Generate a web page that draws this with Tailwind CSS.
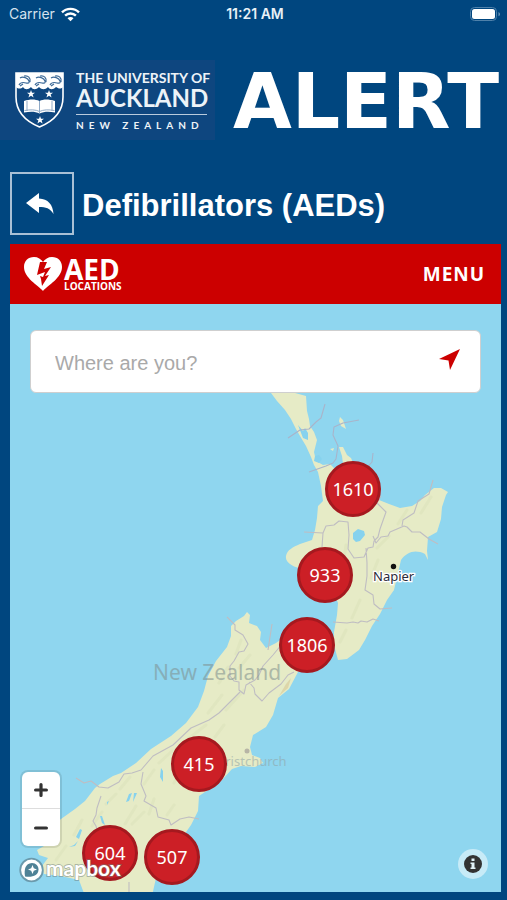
<!DOCTYPE html>
<html lang="en">
<head>
  <meta charset="UTF-8" />
  <meta name="viewport" content="width=device-width, initial-scale=1.0" />
  <title>Alert - Defibrillators (AEDs)</title>
  <script src="https://cdn.jsdelivr.net/npm/@tailwindcss/browser@4"></script>
</head>
<body class="bg-[#00467f] text-white font-['Liberation_Sans',sans-serif]">
<div class="flex flex-col min-h-screen pb-2">

  <!-- Status bar -->
  <div class="grid grid-cols-3 items-center h-7 pl-[9px] pr-1.5 text-sm font-['Inter',sans-serif]">
    <div class="flex items-center gap-1.5 text-[#d5e2ee]">
      <span>Carrier</span>
      <svg class="w-[19px] h-[15px]" viewBox="0 0 19 15" fill="none" stroke="#fff" stroke-width="2.4">
        <path d="M1 5.4C5.6.7 13.400.7 18 5.400" />
        <path d="M4.100 8.700c3-3 7.800-3 10.800 0" />
        <path d="M6.500 11.200c1.600-1.600 4.400-1.600 6 0L9.500 14.300z" fill="#fff" stroke="none" />
      </svg>
    </div>
    <div class="text-center font-semibold text-[#e8f0f6]">11:21 AM</div>
    <svg class="justify-self-end w-[31px] h-[15px]" viewBox="0 0 31 15">
      <rect x=".5" y=".5" width="26" height="13" rx="4" fill="none" stroke="#4f81aa" />
      <rect x="2" y="2" width="23" height="10" rx="2.500" fill="#fff" />
      <path d="M28.500 5c2 .8 2 3.500 0 4.300z" fill="#6f97b9" />
    </svg>
  </div>

  <!-- Logo -->
  <header class="flex items-center justify-between mt-6 h-[96px] pr-2">
    <div class="flex items-center gap-3 h-20 pl-[15px] pr-2 bg-[#0e467f]">
      <svg class="w-[49px] h-[56px] shrink-0" viewBox="0 0 49 56">
        <path d="M1 1h47v24c0 15-9 24-23.500 30C10 49 1 40 1 25z" fill="#0e467f" stroke="#fff" stroke-width="1.600" />
        <path d="M1 1h47v14c-3 3-5 1-7 0-3 3-6 3-8 0-3 3-6 3-9 0-3 3-6 3-8 0-3 3-6 3-8 0-2 2-5 2-7 0z" fill="#fff" />
        <g fill="none" stroke="#3d6a98" stroke-width="1.200">
          <path id="kiwi" d="M4 13c2-4 7-2 7-2s4 1 3-2-6-5-9-3M9 4c4-1 7 2 6 6M5 14l3-2" />
          <use href="#kiwi" x="16" />
          <use href="#kiwi" x="31" />
        </g>
        <g fill="#fff">
          <path id="star" d="M16 18l1 2.700h3l-2.400 1.900 1 3L16 23.800l-2.600 1.800 1-3L12 20.700h3z" />
          <use href="#star" x="18" />
          <use href="#star" x="9" y="26" />
          <path d="M9 29c6-2 11-2 15.500 0 4-2 9-2 15.500 0v11.500c-6-1-11-1-15.500 1-4-2-9-2-15.500-1z" />
        </g>
        <path d="M24.500 29v12M12 29v10M37 29v10M9.500 38.500c6-1 11-1 15 1 4-2 9-2 15-1" fill="none" stroke="#8fa9c6" />
      </svg>
      <div class="w-[131px] whitespace-nowrap font-['Lato',sans-serif] text-[#edf3f8]">
        <div class="text-[14px] leading-4 font-bold">THE UNIVERSITY OF</div>
        <div class="text-[24px] leading-6 font-bold">AUCKLAND</div>
        <div class="mt-1 border-t border-[#b9cbdd] pt-1 text-[10px] leading-3 font-bold tracking-[5px]">NEW ZEALAND</div>
      </div>
    </div>
    <div class="mt-1 text-[76px] leading-[80px] font-bold font-['DejaVu_Sans',sans-serif]">ALERT</div>
  </header>

  <!-- Page title -->
  <div class="flex items-center gap-2 mt-6 px-2.5">
    <button type="button" aria-label="Back" class="flex items-center justify-center w-16 h-[63px] border-2 border-[#a9c0d5]">
      <svg class="w-7 h-[21px] mr-1" viewBox="0 0 28 21" fill="#fff">
        <path d="M0 10L13 0v5.500c9 .5 14 6 14.500 15.500C24 15 20 14 13 14v6z" />
      </svg>
    </button>
    <h1 class="pt-1 text-[31px] leading-10 font-bold">Defibrillators (AEDs)</h1>
  </div>

  <!-- AED locations -->
  <main class="flex flex-col flex-1 mt-[9px] ml-2.5 mr-1.5 font-['Open_Sans',sans-serif]">
    <nav class="flex items-center justify-between h-[60px] bg-[#cc0000] pl-[14px] pr-4">
      <a href="#" class="flex items-center gap-0.5">
        <svg class="w-[38px] h-[34px]" viewBox="0 0 38 34">
          <path d="M19 34C14 28 0 21 0 10 0 4 4 0 10 0c4 0 7 2 9 5 2-3 5-5 9-5 6 0 10 4 10 10 0 11-14 18-19 24z" fill="#fff" />
          <path d="M16 5h7l-3 7 7-2-6 9 4-1-7 11-1-7-1-3 3 1 2-5-8 3z" fill="#c00" />
        </svg>
        <span class="font-bold">
          <span class="block text-[28px] leading-6">AED</span>
          <span class="block text-[10px] leading-[10px]">LOCATIONS</span>
        </span>
      </a>
      <button type="button" class="text-[19px] font-bold tracking-wider">MENU</button>
    </nav>

    <div class="relative flex-1 min-h-[588px] overflow-hidden bg-[#8fd6ef]">

      <!-- Map -->
      <svg class="absolute inset-0 w-full h-full" viewBox="10 304 491 588" preserveAspectRatio="xMinYMin slice">
        <g fill="#e6ebc6">
          <path d="M266 385l5 8 6 8 8 9 6 9 5 10 4 7 6 10 5 11 3 8 4 7 3 14 2 15-5 5-1 12-2 12-3 10-12 4c-7 3-13 6-14 12s6 10 13 12l30 13 9 22-1 12-3 17v13l4 15 9-1 12-9 6-10 7-14 8-12 7-14 7-10 4-17 3-13c6-8 14-11 24-6l3 6-1-9 1-14 9-5 4-13 1-12 4-12 2-3-7-4h-7l-9 7-5 6-8 5-12 2-11-4-10-4-14-15-8-10-2-8-4-9-4-3-4-8h-4l3 9 1 8-1 9-6-3-6-6-7 1-7-4-2-9 3-12-3-8-4-6-1-7-2-8-1-15z" />
          <path d="M340 417l3 3 3 9-5-3-2-5zM330 449l4-1-1 3z" />
          <path d="M247 612l3 3-1 8 8 3 4 6-1 8 6 8 10-5 14-10 20 27-12 12-9 17-11 9-5 17-7 12-13 8-3 12 2 8 8 3 3 5-8 4-14-1-9 3-10 11-14 10-9 6-1 15-7 14-12 17-14 24-9 12-4 18H85l-6-16-18-4-17-2-2-8 6-8-9-3-2-5 7-4 8-19 9-8 14-10 10-8 10-13 5-4 13-8 8-3 15-10 15-14 20-13 15-13 12-16 6-16 4-15 8-15 11-14 4-11v-10l5-5 8-5z" />
        </g>
        <!-- Relief -->
        <g fill="none" stroke="#d9e1b8" stroke-width="3" stroke-linecap="round" opacity=".45">
          <path d="M241 640l-5 14M250 655l-11 13M228 667l-9 16M222 695l-14 18M244 690l-18 20M206 725l-18 14M224 725l-9 12M172 751l-13 12M184 765l-10 18M154 770l-10 14M130 777l-10 12M116 794l-10 10M136 806l-11 18M102 812l-10 14M82 820l-8 15M154 799l-5 15M144 812l-12 12M66 846l-10 14M174 805l-7 10M90 860l-12 10" />
          <path d="M407 510l-9 14M431 497l-10 16M389 536l-12 12M378 560l-7 18M360 600l-8 18M346 630l-6 12M369 503l-10 8M346 545l-2 14" />
        </g>
        <path d="M286 684l5-6-3 10-9 8z" fill="#d8cd9d" opacity=".7" />
        <!-- Lakes -->
        <g fill="#86d2ee">
          <path d="M353 533l5-4 6 2 1 4-5 6-4 1-3-3zM315 456l4-1 3 4-3 4-5-2zM298 425l5 6 2-3 3 5v7l-5-2z" />
          <path d="M161 768l2 3v11l-3-5zM129 794l3-1-3 8-3 1zM134 793l3 0-4 9zM80 829l2 1-3 9-3-2zM69 847l5-2 4-4-3 5zM100 816l2 0 3 9-3-2zM107 802l2-1-2 4z" />
        </g>
        <!-- Region boundaries -->
        <g fill="none" stroke="#bfbdc2" stroke-width="1.100" stroke-linejoin="round">
          <path d="M288 438l12-8 9-1 7-7 5-4 4-14M309 472l17-6 7-3 3-4 2-13-5-11 1-8 9-4 16-3M364 471l8-9 1-9" stroke="#a9b4ca" />
          <path d="M304 532l19 1 3-7 8-1 5-4 9 1 1 13-1 14 6 9 10-1 4-9 5-1 1-6 4-4 2-8 6-17-9-9 4-7M373 536l3 7 5-6 7-1 2-4 14-6 3 1 5 5 8 0 9 7 9 5M402 526l1-6 11-7 4-12 11-7 4-14M323 533l-1 14M366 548l1 15 0 13-2 14 8 5 1 9 6 5 12-1M333 622l14 1 6-1 5 1 3-2 6 1 6-3 6 2" />
          <path d="M227 617l8 8 0 5 8 5 5 9-4 7-5 1-5 9-4 5v10l4 5 5 1 0 8 5 4 2-9 9-5 4-5 4-9 10-11 9-11 5-7M272 624l-4 26M249 682l5 6 1 6 7 7 7-8 12-9 7-9 6-3M240 692l-11 11-10 10-10 7-18 8-18 17-20 11-12 14-9 3-8 1-5 8-11 6-9-1-8-6-7 2-8-5M101 796l-4 12-1 7-3 6 3 5 3 12M143 772l-2 12 5 12-2 5 12 7 2 9 11 3 2 5 9-6 9-2 10 2M129 882v10" />
        </g>
        <circle cx="247" cy="751" r="2.500" fill="#b7b5a6" />
        <circle cx="393.500" cy="566.500" r="2.700" fill="#111" />
        <g font-family="'Noto Sans', sans-serif">
          <text x="153" y="680" font-size="21" fill="#7f8f8d" opacity=".55">New Zealand</text>
          <text x="209" y="766" font-size="13" fill="#8fa3a4" opacity=".55">Christchurch</text>
          <text x="373" y="581" font-size="13" fill="#2b2b3a" stroke="#fff" stroke-width="2.500" paint-order="stroke">Napier</text>
        </g>
      </svg>

      <!-- Clusters -->
      <div class="text-[18px] font-['Noto_Sans',sans-serif] [&>button]:absolute [&>button]:size-14 [&>button]:rounded-full [&>button]:border-3 [&>button]:border-[#a5191f] [&>button]:bg-[#cc1f26]">
        <button type="button" class="left-[315px] top-[157px]">1610</button>
        <button type="button" class="left-[287px] top-[243px]">933</button>
        <button type="button" class="left-[269px] top-[313px]">1806</button>
        <button type="button" class="left-[161px] top-[432px]">415</button>
        <button type="button" class="left-[72px] top-[521px]">604</button>
        <button type="button" class="left-[134px] top-[525px]">507</button>
      </div>

      <!-- Search -->
      <form class="relative flex items-center mt-[26px] mx-5 h-[63px] rounded-md border border-[#cfcfcf] bg-white pl-6 pr-5 font-['Liberation_Sans',sans-serif]">
        <input type="text" aria-label="Where are you?" placeholder="Where are you?" class="flex-1 min-w-0 pt-0.5 text-[20px] text-gray-700 placeholder:text-[#a9a9a9] outline-none" />
        <button type="button" aria-label="Use my location" class="mb-1">
          <svg class="w-[21px] h-[21px]" viewBox="0 0 21 21" fill="#cc0000">
            <path d="M21 0L11 21 9.500 11.500 0 10z" />
          </svg>
        </button>
      </form>

      <!-- Zoom control -->
      <div class="absolute left-3 bottom-[46px] w-[38px] rounded-md bg-white shadow-[0_0_0_2px_rgba(0,0,0,0.1)] divide-y divide-[#dddddd]">
        <button type="button" aria-label="Zoom in" class="flex items-center justify-center w-full h-[37px]">
          <svg class="w-[14px] h-[14px]" viewBox="0 0 14 14" stroke="#333" stroke-width="3.200" stroke-linecap="round"><path d="M7 1.600v10.800M1.600 7h10.800" /></svg>
        </button>
        <button type="button" aria-label="Zoom out" class="flex items-center justify-center w-full h-[37px]">
          <svg class="w-[14px] h-[14px]" viewBox="0 0 14 14" stroke="#333" stroke-width="3.200" stroke-linecap="round"><path d="M1.600 7h10.800" /></svg>
        </button>
      </div>

      <!-- Mapbox -->
      <a href="#" aria-label="Mapbox" class="absolute left-2 bottom-2">
        <svg class="w-28 h-7 overflow-visible" viewBox="0 0 112 28">
          <circle cx="13.500" cy="14" r="11.300" fill="#fff" stroke="#6b9aac" stroke-width="1.800" />
          <path d="M7 20.500c-1-7 0-13 7-13.500 4 0 6.500 3 6.500 6.500 0 6-6 8-13.500 7z" fill="#4f8296" />
          <path d="M14.500 9l1.300 3.200L19 13.500l-3.200 1.300-1.300 3.200-1.300-3.200-3.200-1.300 3.200-1.300z" fill="#fff" />
          <text x="28" y="20" font-family="Lato, sans-serif" font-size="21" font-weight="700" fill="#fff" stroke="#6f7f80" stroke-width="1.800" stroke-opacity=".5" paint-order="stroke">mapbox</text>
        </svg>
      </a>

      <!-- Attribution -->
      <button type="button" aria-label="Map information" class="absolute right-[13px] bottom-[13px] flex items-center justify-center size-[30px] rounded-full bg-white/50">
        <svg class="w-[18px] h-[18px]" viewBox="0 0 18 18">
          <circle cx="9" cy="9" r="9" fill="#333" />
          <path d="M7.500 3.500h3v2.500h-3zM6.500 7.500h4v5h1V14h-5v-1.500h1V9h-1z" fill="#e2f2f8" />
        </svg>
      </button>
    </div>
  </main>
</div>
</body>
</html>
